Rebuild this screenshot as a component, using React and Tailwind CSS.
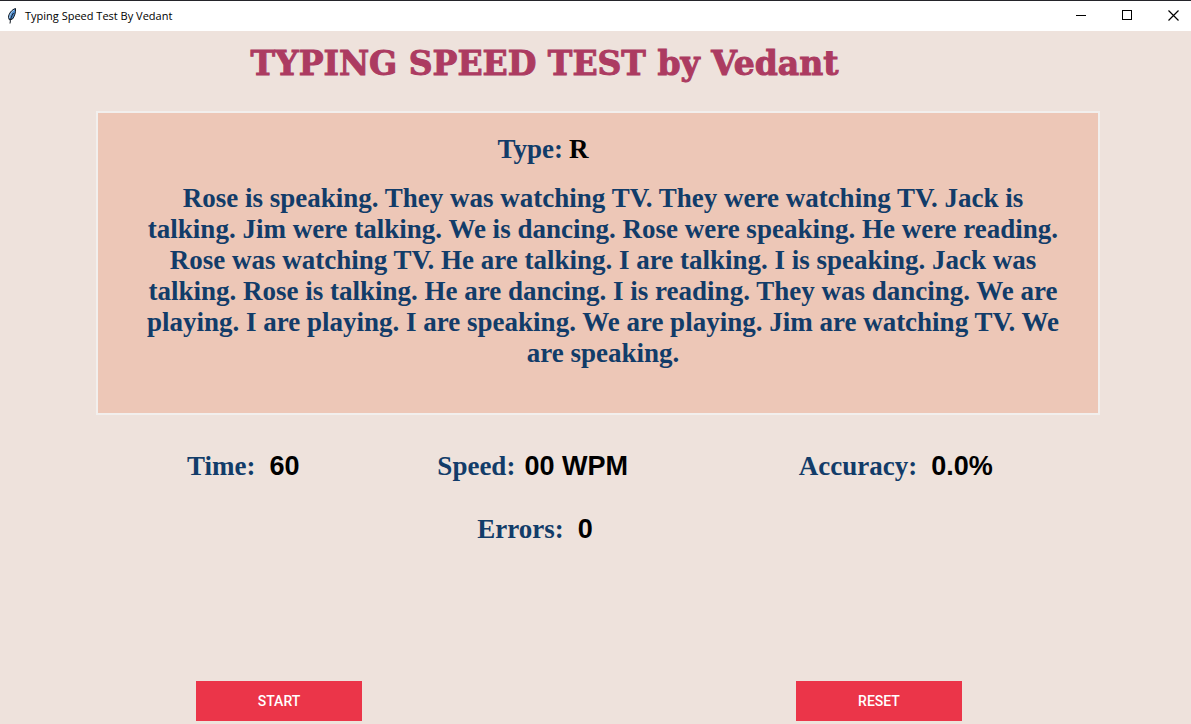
import { useState } from "react";

const PASSAGE =
  "Rose is speaking. They was watching TV. They were watching TV. Jack is talking. Jim were talking. We is dancing. Rose were speaking. He were reading. Rose was watching TV. He are talking. I are talking. I is speaking. Jack was talking. Rose is talking. He are dancing. I is reading. They was dancing. We are playing. I are playing. I are speaking. We are playing. Jim are watching TV. We are speaking.";

function Feather() {
  return (
    <svg width="12" height="18" viewBox="0 0 12 18" aria-hidden="true">
      <path d="M9.500 1.500C6 2.500 2.500 6.500 2.500 10.500L3.500 13L6.500 12C8.500 9.500 10 5 9.500 1.500Z" fill="#4b8bd0" stroke="#111820" />
      <path d="M8 3C5.500 5 3.500 8 3.500 11" fill="none" stroke="#a9c9e6" />
      <path d="M7.500 6C5.500 9 4.500 12 4 16.500" fill="none" stroke="#111820" />
    </svg>
  );
}

function TitleBar() {
  return (
    <header className="flex h-[31px] items-center justify-between border-t border-[#24242a] bg-white pl-[6px] text-black">
      <div className="flex items-center gap-[7px]">
        <Feather />
        <span className="font-['Segoe_UI','Open_Sans',sans-serif] text-[11px] leading-[16px]">Typing Speed Test By Vedant</span>
      </div>
      <div className="flex gap-[10px] self-stretch pb-px">
        <button type="button" aria-label="Minimize" className="flex w-9 items-center justify-center">
          <svg width="11" height="11" viewBox="0 0 11 11" aria-hidden="true">
            <path d="M0 5.500H10" stroke="black" />
          </svg>
        </button>
        <button type="button" aria-label="Maximize" className="flex w-9 items-center justify-center">
          <svg width="11" height="11" viewBox="0 0 11 11" aria-hidden="true">
            <rect x="0.500" y="0.500" width="9" height="9" fill="none" stroke="black" />
          </svg>
        </button>
        <button type="button" aria-label="Close" className="flex w-9 items-center justify-center">
          <svg width="11" height="11" viewBox="0 0 11 11" aria-hidden="true">
            <path d="M0.500 0.500L10.500 10.500M10.500 0.500L0.500 10.500" stroke="black" strokeWidth="1.200" />
          </svg>
        </button>
      </div>
    </header>
  );
}

function Stat({ label, value, className }) {
  return (
    <div className={`flex items-center whitespace-nowrap text-[27px] leading-[31px] font-bold ${className}`}>
      <dt className="text-[#123c69]">{label}</dt>
      <dd className="font-['Liberation_Sans',Arial,sans-serif] text-black">{value}</dd>
    </div>
  );
}

function ActionButton({ children, onClick }) {
  return (
    <button
      type="button"
      onClick={onClick}
      className="h-10 w-[166px] bg-[#eb3549] font-['Roboto',sans-serif] text-[14px] font-medium text-white"
    >
      {children}
    </button>
  );
}

export default function App() {
  const [typed, setTyped] = useState("R");
  return (
    <div className="flex min-h-screen flex-col bg-[#eee2dc] font-['Liberation_Serif','Times_New_Roman',serif]">
      <TitleBar />
      <main className="flex grow flex-col pr-[91px] pb-[3px] pl-[96px]">
        <h1 className="mt-[15px] h-[65px] pr-[107px] text-center font-['Rockwell_Extra_Bold','DejaVu_Serif',serif] text-[33px] leading-[36px] font-extrabold text-[#ac3b61] [-webkit-text-stroke:1px_#ac3b61]">
          TYPING SPEED TEST by Vedant
        </h1>
        <section className="flex min-h-[304px] flex-col border-2 border-[#f2efed] bg-[#edc7b7] pt-[21px] pb-[42px] text-[27px] leading-[31px] font-bold text-[#123c69]">
          <div className="flex justify-center gap-[6px] pr-[110px]">
            <span>Type:</span>
            <span className="text-black">{typed}</span>
          </div>
          <p className="mt-[18px] pr-[33px] pl-[43px] text-center">{PASSAGE}</p>
        </section>
        <dl className="mt-9 grid grid-cols-[34%_36%_30%] gap-y-8">
          <Stat label="Time:" value="60" className="gap-[14px] pl-[91px]" />
          <Stat label="Speed:" value="00 WPM" className="gap-[9px]" />
          <Stat label="Accuracy:" value="0.0%" className="gap-[14px]" />
          <Stat label="Errors:" value="0" className="col-start-2 gap-[14px] pl-10" />
        </dl>
        <div className="mt-auto flex justify-between pr-[138px] pl-[100px]">
          <ActionButton onClick={() => setTyped("R")}>START</ActionButton>
          <ActionButton onClick={() => setTyped("R")}>RESET</ActionButton>
        </div>
      </main>
    </div>
  );
}
